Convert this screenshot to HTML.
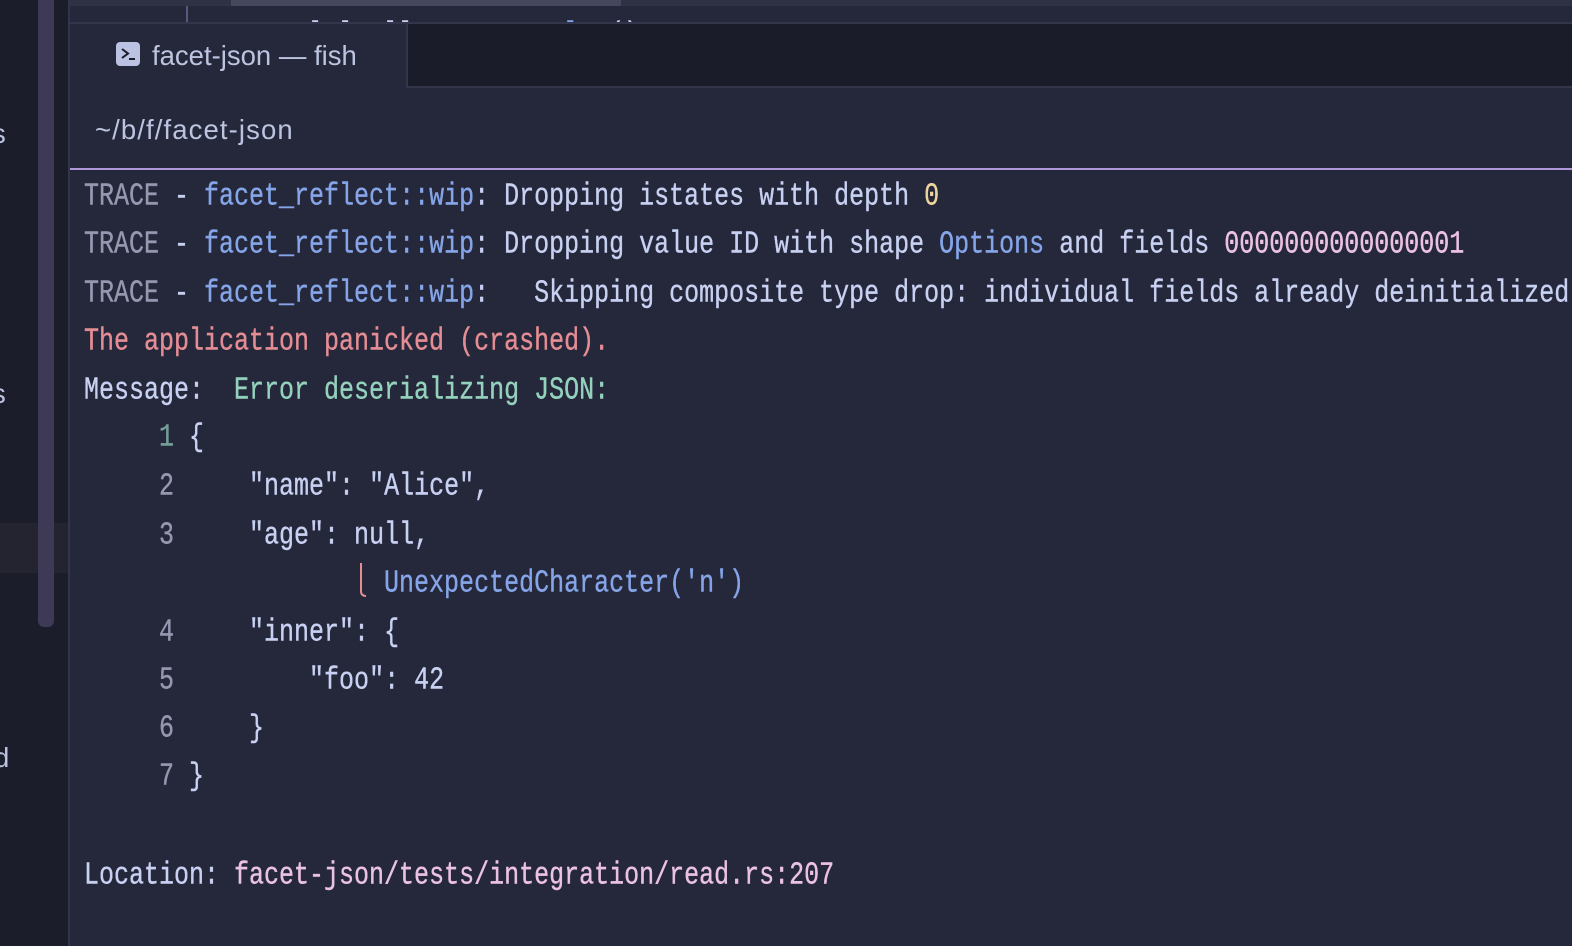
<!DOCTYPE html>
<html><head><meta charset="utf-8"><style>
html,body{margin:0;padding:0;background:#25273a;width:1572px;height:946px;overflow:hidden}
.a{position:absolute}
.l{position:absolute;left:84px;height:30px;line-height:30px;white-space:pre;font-family:"Liberation Mono",monospace;font-size:25px;color:#c8d1f2;-webkit-text-stroke:.3px;transform:scaleY(1.27);transform-origin:0 50%}
.s{position:absolute;white-space:pre;font-family:"Liberation Sans",sans-serif;color:#bcc4e0}
.g{color:#9498b0}.b{color:#85a5e8}.r{color:#e48d94}.t{color:#94d2bd}.p{color:#ebc2e2}.y{color:#eed49f}.n{color:#739f97}
</style></head><body>
<div class="a" style="left:0;top:0;width:68px;height:946px;background:#1c1d2b"></div>
<div class="a" style="left:0;top:523px;width:68px;height:50px;background:#23242f"></div>
<div class="a" style="left:38px;top:0;width:16px;height:627px;background:#3e3955;border-radius:0 0 6px 6px"></div>
<div class="a" style="left:68px;top:0;width:2px;height:946px;background:#33354a"></div>
<div class="a" style="left:70px;top:0;width:1502px;height:6px;background:#2f3145"></div>
<div class="a" style="left:231px;top:0;width:390px;height:6px;background:#45475c"></div>
<div class="a" style="left:70px;top:6px;width:1502px;height:16px;overflow:hidden">
<div class="l" style="left:50px;top:15px;color:#8e92ab">108</div>
<div class="l" style="left:14px;top:15px">           &amp;   l l  ll T        <span class="b">l</span>  ()</div>
</div>
<div class="a" style="left:186px;top:6px;width:2px;height:16px;background:#5b5680"></div>
<div class="a" style="left:70px;top:22px;width:1502px;height:2px;background:#33354a"></div>
<div class="a" style="left:407px;top:24px;width:1165px;height:62px;background:#1b1c29"></div>
<div class="a" style="left:406px;top:24px;width:2px;height:64px;background:#33354a"></div>
<div class="a" style="left:406px;top:86px;width:1166px;height:2px;background:#33354a"></div>
<svg class="a" style="left:116px;top:42px" width="24" height="24" viewBox="0 0 24 24"><rect width="24" height="24" rx="4" fill="#bcc2e2"/><path d="M6 7l6 4.5L6 16" fill="none" stroke="#1b1c29" stroke-width="2"/><path d="M13 17h6" stroke="#1b1c29" stroke-width="2"/></svg>
<div class="s" style="left:152px;top:39px;font-size:27.5px;line-height:34px">facet-json — fish</div>
<div class="s" style="left:95px;top:113px;font-size:27.5px;line-height:34px;letter-spacing:1.1px">~/b/f/facet-json</div>
<div class="s" style="left:-8px;top:117px;font-size:27.5px;line-height:34px">s</div>
<div class="s" style="left:-8px;top:377px;font-size:27.5px;line-height:34px">s</div>
<div class="s" style="left:-6px;top:741px;font-size:27.5px;line-height:34px">d</div>
<div class="a" style="left:70px;top:168px;width:1502px;height:2px;background:#b097d8"></div>
<div class="l" style="top:182px"><span class="g">TRACE</span> - <span class="b">facet_reflect::wip</span>: Dropping istates with depth <span class="y">0</span></div>
<div class="l" style="top:230px"><span class="g">TRACE</span> - <span class="b">facet_reflect::wip</span>: Dropping value ID with shape <span class="b">Options</span> and fields <span class="p">0000000000000001</span></div>
<div class="l" style="top:278.5px"><span class="g">TRACE</span> - <span class="b">facet_reflect::wip</span>:   Skipping composite type drop: individual fields already deinitialized</div>
<div class="l r" style="top:327px">The application panicked (crashed).</div>
<div class="l" style="top:375.5px">Message:  <span class="t">Error deserializing JSON:</span></div>
<div class="l" style="top:423px">     <span class="n">1</span> {</div>
<div class="l" style="top:472px">     <span class="g">2</span>     "name": "Alice",</div>
<div class="l" style="top:520.5px">     <span class="g">3</span>     "age": null,</div>
<svg class="a" style="left:358px;top:562px" width="10" height="36" viewBox="0 0 10 36"><path d="M3 1V29Q3 34 8 34" fill="none" stroke="#e48d94" stroke-width="2"/></svg>
<div class="l b" style="top:569px">                    UnexpectedCharacter('n')</div>
<div class="l" style="top:618px">     <span class="g">4</span>     "inner": {</div>
<div class="l" style="top:665.5px">     <span class="g">5</span>         "foo": 42</div>
<div class="l" style="top:714px">     <span class="g">6</span>     }</div>
<div class="l" style="top:762px">     <span class="g">7</span> }</div>
<div class="l" style="top:860.5px">Location: <span class="p">facet-json/tests/integration/read.rs:207</span></div>
</body></html>
